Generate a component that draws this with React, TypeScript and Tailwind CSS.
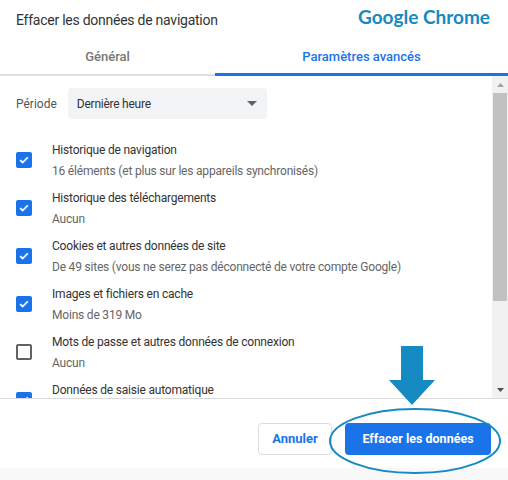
import React from "react";

const items = [
  { title: "Historique de navigation", sub: "16 éléments (et plus sur les appareils synchronisés)", checked: true },
  { title: "Historique des téléchargements", sub: "Aucun", checked: true },
  { title: "Cookies et autres données de site", sub: "De 49 sites (vous ne serez pas déconnecté de votre compte Google)", checked: true },
  { title: "Images et fichiers en cache", sub: "Moins de 319 Mo", checked: true },
  { title: "Mots de passe et autres données de connexion", sub: "Aucun", checked: false },
  { title: "Données de saisie automatique", sub: "", checked: true },
];

const Checkbox = ({ checked }: { checked: boolean }) =>
  checked ? (
    <div className="w-4 h-4 rounded-[2px] bg-[#1a73e8] flex items-center justify-center shrink-0">
      <svg width="12" height="12" viewBox="0 0 12 12">
        <path d="M2.2 6.2l2.4 2.4 5.2-5.2" fill="none" stroke="white" strokeWidth="1.8" />
      </svg>
    </div>
  ) : (
    <div className="w-4 h-4 rounded-[2px] border-2 border-[#5f6368] shrink-0" />
  );

export default function App() {
  return (
    <div className="relative w-[508px] h-[480px] bg-white overflow-hidden font-['Roboto',sans-serif] text-[#333]">
      {/* header */}
      <div className="flex items-start justify-between h-[40px] pl-4 pr-[18px]">
        <div className="pt-[10px] text-[14px] tracking-[-0.25px] text-[#333]">Effacer les données de navigation</div>
        <div className="pt-[3px] font-['Lato',sans-serif] font-bold text-[19px] text-[#1689c4]">Google Chrome</div>
      </div>

      {/* tabs */}
      <div className="flex h-[36px]">
        <div className="w-[215px] flex items-center justify-center text-[13px] font-medium text-[#777] border-b-2 border-[#e0e0e0]">
          Général
        </div>
        <div className="flex-1 flex items-center justify-center text-[13px] font-medium text-[#1a73e8] border-b-[3px] border-[#1a73e8]">
          Paramètres avancés
        </div>
      </div>

      {/* scroll area */}
      <div className="flex h-[323px] border-b border-[#dadada]">
        <div className="flex-1 overflow-hidden">
          <div className="flex items-center gap-[11px] pl-4 pt-3">
            <span className="text-[12px] text-[#555]">Période</span>
            <div className="w-[199px] h-[31px] bg-[#f1f3f4] rounded-[4px] flex items-center justify-between pl-[9px] pr-[10px] text-[12px] tracking-[-0.25px] text-[#333]">
              Dernière heure
              <svg width="10" height="5" viewBox="0 0 10 5">
                <path d="M0 0h10L5 5z" fill="#5f6368" />
              </svg>
            </div>
          </div>
          <div className="pt-[17px]">
            {items.map((it) => (
              <div key={it.title} className="flex items-center h-[48px] pl-4">
                <Checkbox checked={it.checked} />
                <div className="pl-[20px] flex flex-col gap-[3px] h-[39px] leading-[18px] tracking-[-0.2px]">
                  <span className="text-[12px] text-[#333] whitespace-nowrap">{it.title}</span>
                  {it.sub && <span className="text-[12px] text-[#666] whitespace-nowrap">{it.sub}</span>}
                </div>
              </div>
            ))}
          </div>
        </div>
        {/* scrollbar */}
        <div className="w-[16px] bg-[#f1f1f1] flex flex-col items-center">
          <div className="h-[17px] flex items-center justify-center">
            <svg width="7" height="4" viewBox="0 0 7 4">
              <path d="M0 4h7L3.5 0z" fill="#a3a3a3" />
            </svg>
          </div>
          <div className="w-[14px] h-[208px] bg-[#c1c1c1]" />
          <div className="flex-1" />
          <div className="h-[17px] flex items-center justify-center">
            <svg width="7" height="4" viewBox="0 0 7 4">
              <path d="M0 0h7L3.5 4z" fill="#505050" />
            </svg>
          </div>
        </div>
      </div>

      {/* footer */}
      <div className="flex justify-end items-start gap-[13px] h-[69px] pr-[17px] pt-[24px]">
        <button className="h-[32px] w-[74px] rounded-[4px] border border-[#dadce0] bg-white text-[13px] font-bold text-[#1a73e8]">
          Annuler
        </button>
        <button className="h-[32px] w-[146px] rounded-[4px] bg-[#1a73e8] text-[12.5px] font-bold text-white">
          Effacer les données
        </button>
      </div>
      <div className="h-[12px] bg-[#f8f8f8]" />

      {/* annotation overlay */}
      <svg className="absolute left-0 top-0 pointer-events-none" width="508" height="480">
        <ellipse cx="415" cy="441" rx="85" ry="32" fill="none" stroke="#168ac2" strokeWidth="2" />
        <path d="M401 346h22v34h12l-23 25-23-25h12z" fill="#168ac2" />
      </svg>
    </div>
  );
}
